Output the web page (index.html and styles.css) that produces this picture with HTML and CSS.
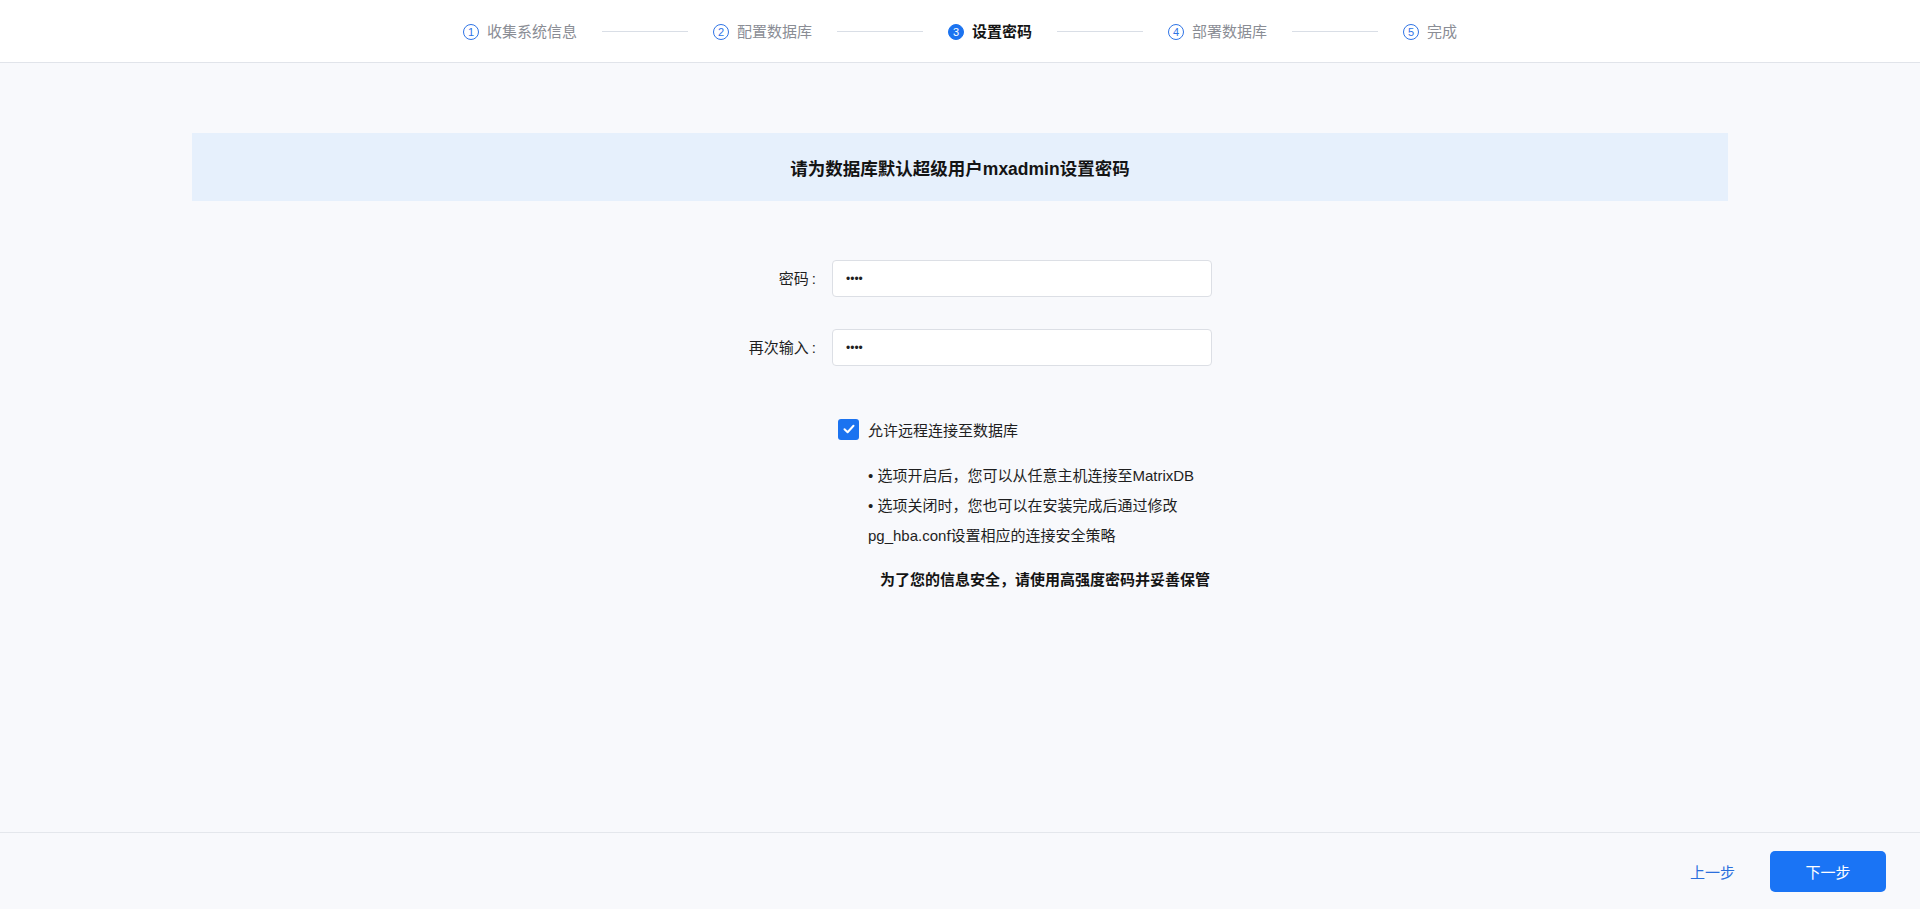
FILE: index.html
```html
<!DOCTYPE html>
<html lang="zh-CN">
<head>
<meta charset="utf-8">
<title>设置密码</title>
<link rel="stylesheet" href="styles.css">
</head>
<body>
<div class="app">
  <header class="steps-bar">
    <div class="step"><span class="num">1</span><span class="label">收集系统信息</span></div>
    <span class="connector"></span>
    <div class="step"><span class="num">2</span><span class="label">配置数据库</span></div>
    <span class="connector"></span>
    <div class="step active"><span class="num">3</span><span class="label">设置密码</span></div>
    <span class="connector"></span>
    <div class="step"><span class="num">4</span><span class="label">部署数据库</span></div>
    <span class="connector"></span>
    <div class="step"><span class="num">5</span><span class="label">完成</span></div>
  </header>

  <main class="content">
    <div class="banner">请为数据库默认超级用户mxadmin设置密码</div>

    <form class="form">
      <label class="form-label" for="pwd">密码<span class="colon">:</span></label>
      <input class="form-input" id="pwd" type="password" value="1234">

      <label class="form-label" for="pwd2">再次输入<span class="colon">:</span></label>
      <input class="form-input" id="pwd2" type="password" value="1234">

      <div class="form-extra">
        <label class="check-row">
          <span class="checkbox">
            <svg width="14" height="14" viewBox="0 0 14 14"><polyline points="2.5,7.2 5.6,10.2 11.5,3.8" fill="none" stroke="#fff" stroke-width="2" stroke-linecap="round" stroke-linejoin="round"/></svg>
          </span>
          <span class="check-text">允许远程连接至数据库</span>
        </label>
        <ul class="notes">
          <li>• 选项开启后，您可以从任意主机连接至MatrixDB</li>
          <li>• 选项关闭时，您也可以在安装完成后通过修改 pg_hba.conf设置相应的连接安全策略</li>
        </ul>
        <p class="warning">为了您的信息安全，请使用高强度密码并妥善保管</p>
      </div>
    </form>
  </main>

  <footer class="footer">
    <button class="btn btn-text" type="button">上一步</button>
    <button class="btn btn-primary" type="button">下一步</button>
  </footer>
</div>
</body>
</html>
```

FILE: styles.css
```css
* {
  box-sizing: border-box;
}

html, body {
  margin: 0;
  padding: 0;
  height: 100%;
}

body {
  font-family: "Liberation Sans", "Noto Sans CJK SC", sans-serif;
  color: #1f1f1f;
  background: #f8f9fc;
}

.app {
  display: flex;
  flex-direction: column;
  height: 100vh;
}

/* ---------- steps ---------- */
.steps-bar {
  height: 63px;
  flex: 0 0 auto;
  background: #fff;
  border-bottom: 1px solid #e1e4ea;
  display: flex;
  align-items: center;
  justify-content: center;
  padding-top: 1px;
}

.step {
  display: flex;
  align-items: center;
  gap: 8px;
}

.step .num {
  width: 16px;
  height: 16px;
  border-radius: 50%;
  border: 1px solid #2f74e6;
  color: #2f74e6;
  font-size: 11px;
  line-height: 14px;
  text-align: center;
  font-family: "Liberation Sans", sans-serif;
}

.step .label {
  font-size: 15px;
  color: #8a8d95;
  line-height: 20px;
}

.step.active .num {
  background: #1b73f0;
  border-color: #1b73f0;
  color: #fff;
}

.step.active .label {
  color: #141414;
  font-weight: 700;
}

.connector {
  width: 86px;
  height: 1px;
  background: #d9dee6;
  margin: 0 25px;
}

/* ---------- content ---------- */
.content {
  flex: 1 1 auto;
  display: flex;
  flex-direction: column;
  align-items: center;
  padding-top: 70px;
}

.banner {
  width: 80%;
  height: 68px;
  background: #e6f0fc;
  display: flex;
  align-items: center;
  justify-content: center;
  font-size: 17.5px;
  font-weight: 700;
  color: #141414;
}

.form {
  width: 504px;
  margin-top: 59px;
  display: grid;
  grid-template-columns: 108px 380px;
  column-gap: 16px;
  row-gap: 32px;
  align-items: center;
}

.form-label {
  text-align: right;
  font-size: 15px;
  color: #1f1f1f;
  line-height: 20px;
}

.form-label .colon {
  margin-left: 3px;
}

.form-input {
  height: 37px;
  width: 380px;
  border: 1px solid #dcdfe5;
  border-radius: 4px;
  background: #fff;
  padding: 0 13px;
  font-size: 12px;
  color: #1f1f1f;
  font-family: "Liberation Sans", sans-serif;
  outline: none;
}

.form-extra {
  grid-column: 2;
  margin-top: 20px;
}

.check-row {
  display: flex;
  align-items: center;
  gap: 9px;
  padding-left: 6px;
  height: 22px;
}

.checkbox {
  width: 21px;
  height: 21px;
  border-radius: 3px;
  background: #1b73f0;
  display: flex;
  align-items: center;
  justify-content: center;
}

.check-text {
  font-size: 15px;
  color: #1f1f1f;
}

.notes {
  list-style: none;
  margin: 21px 0 0;
  padding: 0 0 0 36px;
  font-size: 15px;
  line-height: 30px;
  color: #1f1f1f;
}

.warning {
  margin: 14px 0 0;
  text-align: right;
  font-size: 15px;
  font-weight: 700;
  line-height: 30px;
  color: #141414;
  padding-right: 2px;
}

/* ---------- footer ---------- */
.footer {
  flex: 0 0 auto;
  height: 77px;
  border-top: 1px solid #e4e7ec;
  display: flex;
  align-items: center;
  justify-content: flex-end;
  padding-right: 34px;
  gap: 20px;
}

.btn {
  font-family: "Liberation Sans", "Noto Sans CJK SC", sans-serif;
  font-size: 15px;
  border: none;
  cursor: pointer;
}

.btn-text {
  background: transparent;
  color: #2b6fdc;
  padding: 0 15px;
  height: 41px;
}

.btn-primary {
  width: 116px;
  height: 41px;
  background: #1a74f5;
  color: #fff;
  border-radius: 5px;
}
```
